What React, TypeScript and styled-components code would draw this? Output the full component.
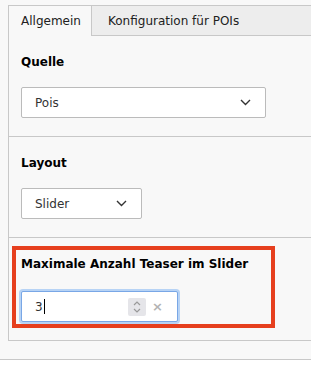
import styled, { createGlobalStyle } from "styled-components";

const GlobalStyle = createGlobalStyle`
  html, body {
    margin: 0;
    padding: 0;
    background: #ffffff;
  }
  body {
    font-family: Verdana, "DejaVu Sans", sans-serif;
    font-size: 12px;
    color: #000;
  }
`;

const Page = styled.div`
  background: #f8f8f8;
  padding: 5px 0 0 8px;
  box-sizing: border-box;
  height: 360px;
  border-bottom: 1px solid #c8c8c8;
`;

const TabBar = styled.div`
  display: flex;
  height: 31px;
`;

type TabProps = {
  active?: boolean;
};

const Tab = styled.div<TabProps>`
  display: flex;
  align-items: center;
  box-sizing: border-box;
  height: 31px;
  font-size: 12px;
  color: #212121;
  background: ${(props) => (props.active ? "#f8f8f8" : "#ededed")};
  border-top: 1px solid #c8c8c8;
  border-left: ${(props) => (props.active ? "1px solid #c8c8c8" : "none")};
  border-right: ${(props) => (props.active ? "1px solid #c8c8c8" : "none")};
  border-bottom: ${(props) => (props.active ? "none" : "1px solid #c8c8c8")};
  flex: ${(props) => (props.active ? "0 0 auto" : "1 1 auto")};
  width: ${(props) => (props.active ? "84px" : "auto")};
  padding-left: ${(props) => (props.active ? "12px" : "16px")};
`;

const Panel = styled.div`
  border-left: 1px solid #c8c8c8;
  border-bottom: 1px solid #c8c8c8;
`;

type SectionProps = {
  last?: boolean;
};

const Section = styled.div<SectionProps>`
  position: relative;
  box-sizing: border-box;
  height: ${(props) => (props.last ? "102px" : "101px")};
  padding: 18px 12px 0;
  border-bottom: ${(props) => (props.last ? "none" : "1px solid #c8c8c8")};
`;

const Label = styled.div`
  font-weight: bold;
  font-size: 12px;
  line-height: 16px;
  color: #000;
  margin-bottom: 17px;
`;

type SelectProps = {
  width: string;
};

const Select = styled.div<SelectProps>`
  display: flex;
  align-items: center;
  justify-content: space-between;
  box-sizing: border-box;
  width: ${(props) => props.width};
  height: 31px;
  padding: 0 14px 0 13px;
  background: #fff;
  border: 1px solid #bbb;
  border-radius: 2px;
  font-size: 12px;
  color: #333;
`;

const Chevron = () => (
  <svg width="11" height="7" viewBox="0 0 11 7">
    <path d="M1 1l4.5 4.5L10 1" fill="none" stroke="#333" strokeWidth="1.4" />
  </svg>
);

const Highlight = styled.div`
  position: absolute;
  left: 3px;
  top: 8px;
  width: 263px;
  height: 82px;
  box-sizing: border-box;
  border: 4px solid #e63f1e;
  pointer-events: none;
`;

const FocusRing = styled.div`
  display: inline-flex;
  margin-left: -2px;
  padding: 2px;
  border-radius: 4px;
  background: #b7d3f5;
`;

const NumberInput = styled.div`
  display: flex;
  align-items: center;
  box-sizing: border-box;
  width: 157px;
  height: 31px;
  padding: 0 8px 0 13px;
  background: #fff;
  border: 1px solid #79a7e6;
  border-radius: 2px;
  font-size: 12px;
  color: #333;
`;

const Value = styled.span`
  flex: 1;
  display: flex;
  align-items: center;
`;

const Caret = styled.span`
  display: inline-block;
  width: 1px;
  height: 15px;
  background: #000;
  margin-left: 1px;
`;

const Spinner = styled.div`
  display: flex;
  align-items: center;
  justify-content: center;
  width: 18px;
  height: 18px;
  background: #e5e5e9;
  border-radius: 2px;
  margin-right: 6px;
`;

const Clear = styled.span`
  color: #b3b3b3;
  font-size: 13px;
  font-weight: bold;
  line-height: 1;
  margin-right: 6px;
`;

export default function App() {
  return (
    <>
      <GlobalStyle />
      <Page>
        <TabBar>
          <Tab active>Allgemein</Tab>
          <Tab>Konfiguration für POIs</Tab>
        </TabBar>
        <Panel>
          <Section>
            <Label>Quelle</Label>
            <Select width="245px">
              <span>Pois</span>
              <Chevron />
            </Select>
          </Section>
          <Section>
            <Label>Layout</Label>
            <Select width="121px">
              <span>Slider</span>
              <Chevron />
            </Select>
          </Section>
          <Section last>
            <Label>Maximale Anzahl Teaser im Slider</Label>
            <FocusRing>
              <NumberInput>
                <Value>
                  3<Caret />
                </Value>
                <Spinner>
                  <svg width="10" height="14" viewBox="0 0 10 14">
                    <path
                      d="M2 5l3-3 3 3M2 9l3 3 3-3"
                      fill="none"
                      stroke="#999"
                      strokeWidth="1.2"
                    />
                  </svg>
                </Spinner>
                <Clear>×</Clear>
              </NumberInput>
            </FocusRing>
            <Highlight />
          </Section>
        </Panel>
      </Page>
    </>
  );
}
